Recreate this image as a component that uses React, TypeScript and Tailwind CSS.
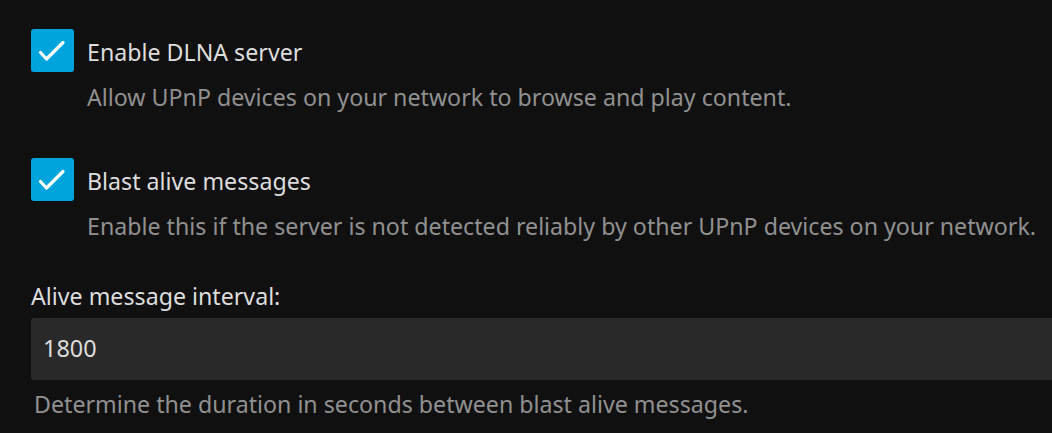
function CheckRow({ label, desc }: { label: string; desc: string }) {
  return (
    <div className="flex gap-[13px]">
      <div className="h-[43px] w-[43px] shrink-0 rounded-[3px] bg-[#00a4dc]">
        <svg viewBox="0 0 43 43" className="h-[43px] w-[43px]" fill="none">
          <path d="M9.5 23.5 15.5 30 32 13.5" stroke="white" strokeWidth={3.2} strokeLinecap="round" strokeLinejoin="round" />
        </svg>
      </div>
      <div className="pt-[8px]">
        <div className="text-[23.2px] leading-[30px] text-[#dddddd]">{label}</div>
        <div className="mt-[15px] text-[23.2px] leading-[30px] text-[#909090]">{desc}</div>
      </div>
    </div>
  );
}

export default function App() {
  return (
    <div
      className="h-[433px] w-[1052px] overflow-hidden bg-[#101010] pl-[31px] pt-[29px]"
      style={{ fontFamily: '"Noto Sans", sans-serif' }}
    >
      <CheckRow
        label="Enable DLNA server"
        desc="Allow UPnP devices on your network to browse and play content."
      />
      <div className="mt-[46px]">
        <CheckRow
          label="Blast alive messages"
          desc="Enable this if the server is not detected reliably by other UPnP devices on your network."
        />
      </div>
      <div className="mt-[40px]">
        <label className="block text-[23.2px] leading-[30px] text-[#dddddd]">Alive message interval:</label>
        <div className="mt-[7px] flex h-[62px] items-center rounded-l-[3px] bg-[#292929] pl-[12px]">
          <span className="text-[23.4px] text-[#dddddd]">1800</span>
        </div>
        <div className="mt-[9px] pl-[3px] text-[23.2px] leading-[30px] text-[#909090]">
          Determine the duration in seconds between blast alive messages.
        </div>
      </div>
    </div>
  );
}
